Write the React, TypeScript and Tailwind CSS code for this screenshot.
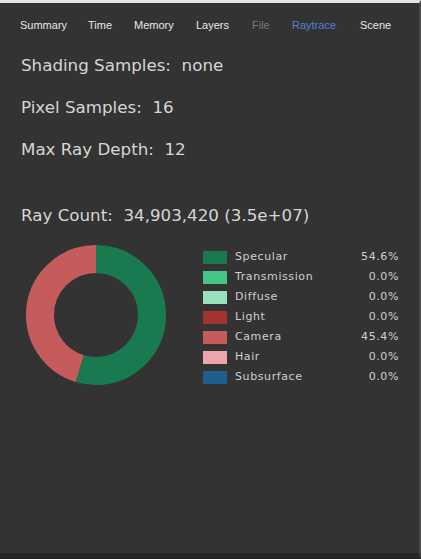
import React from "react";

const tabs = [
  { name: "Summary", w: "w-[68px]", color: "text-[#e8e8e8]" },
  { name: "Time", w: "w-[46px]", color: "text-[#e8e8e8]" },
  { name: "Memory", w: "w-[62px]", color: "text-[#e8e8e8]" },
  { name: "Layers", w: "w-[56px]", color: "text-[#e8e8e8]" },
  { name: "File", w: "w-[40px]", color: "text-[#7a7a7a]" },
  { name: "Raytrace", w: "w-[68px]", color: "text-[#4f82d6]" },
  { name: "Scene", w: "w-auto", color: "text-[#e8e8e8]" },
];

const rays = [
  { name: "Specular", pct: 54.6, color: "#1a7a4f" },
  { name: "Transmission", pct: 0, color: "#45c586" },
  { name: "Diffuse", pct: 0, color: "#9ae2be" },
  { name: "Light", pct: 0, color: "#a33232" },
  { name: "Camera", pct: 45.4, color: "#c65b5b" },
  { name: "Hair", pct: 0, color: "#eba5ab" },
  { name: "Subsurface", pct: 0, color: "#1d5f8e" },
];

function Donut() {
  const cx = 70, cy = 70, r = 56, sw = 28;
  const circ = 2 * Math.PI * r;
  let offset = 0;
  return (
    <svg width="140" height="140" viewBox="0 0 140 140">
      <g transform={`rotate(-90 ${cx} ${cy})`}>
        {rays.filter(s => s.pct > 0).map(s => {
          const len = (s.pct / 100) * circ;
          const el = (
            <circle
              key={s.name}
              cx={cx}
              cy={cy}
              r={r}
              fill="none"
              stroke={s.color}
              strokeWidth={sw}
              strokeDasharray={`${len} ${circ - len}`}
              strokeDashoffset={-offset}
            />
          );
          offset += len;
          return el;
        })}
      </g>
    </svg>
  );
}

export default function App() {
  return (
    <div
      className="w-[421px] h-[559px] bg-[#333333] border-t-[3px] border-t-[#e4e4e4] border-r-2 border-r-[#4a4a4a] border-b-[6px] border-b-[#252525] flex flex-col"
      style={{ fontFamily: "'DejaVu Sans', Verdana, sans-serif" }}
    >
      <div className="flex items-center h-[42px] pl-[20px] pt-[3px] text-[11px] font-['Liberation_Sans',Arial,sans-serif]">
        {tabs.map(t => (
          <div key={t.name} className={`${t.w} ${t.color}`}>
            {t.name}
          </div>
        ))}
      </div>

      <div className="pl-[21px] text-[#d6d6d6] text-[16.7px] flex flex-col">
        <div className="h-[42px] flex items-center">Shading Samples:&nbsp; none</div>
        <div className="h-[42px] flex items-center">Pixel Samples:&nbsp; 16</div>
        <div className="h-[42px] flex items-center">Max Ray Depth:&nbsp; 12</div>
        <div className="h-[42px] flex items-center mt-[24px]">Ray Count:&nbsp; 34,903,420 (3.5e+07)</div>
      </div>

      <div className="flex mt-[10px] pl-[26px]">
        <div className="-mt-[2px]">
          <Donut />
        </div>
        <div className="ml-[37px] flex flex-col text-[11px] tracking-[0.6px] text-[#cfcfcf]">
          {rays.map(s => (
            <div key={s.name} className="h-[20px] flex items-center w-[196px]">
              <div className="w-[24px] h-[13px]" style={{ backgroundColor: s.color }} />
              <div className="ml-[8px] flex-1">{s.name}</div>
              <div className="text-right">{s.pct.toFixed(1)}%</div>
            </div>
          ))}
        </div>
      </div>
    </div>
  );
}
